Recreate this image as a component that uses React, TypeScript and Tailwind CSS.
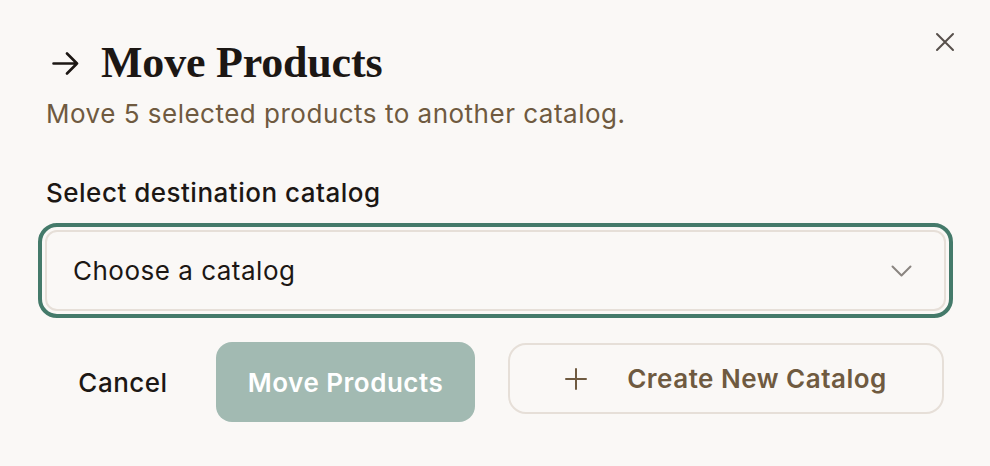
import React from "react";

export default function App() {
  return (
    <div
      className="relative w-[990px] h-[466px] bg-[#faf8f6] overflow-hidden"
      style={{ fontFamily: "Inter, 'Noto Sans', sans-serif" }}
    >
      <button className="absolute left-[933px] top-[30px] w-[24px] h-[24px] flex items-center justify-center text-[#57504b]">
        <svg width="20" height="20" viewBox="0 0 20 20" fill="none" stroke="currentColor" strokeWidth="2" strokeLinecap="round">
          <path d="M2 2 L18 18 M18 2 L2 18" />
        </svg>
      </button>

      <div className="pl-[46px] pr-[44px] pt-[38px]">
        <div className="flex items-center h-[50px] pl-[6px]">
          <svg width="27" height="23" viewBox="0 0 27 23" fill="none" stroke="#1c1714" strokeWidth="2.6" strokeLinecap="round" strokeLinejoin="round">
            <path d="M1.5 11.5 H25 M15 1.5 L25 11.5 L15 21.5" />
          </svg>
          <h1
            className="ml-[22px] text-[44px] leading-[50px] font-bold text-[#1c1714] tracking-[-0.2px]"
            style={{ fontFamily: "'Liberation Serif', 'DejaVu Serif', serif" }}
          >
            Move Products
          </h1>
        </div>
        <p className="mt-[10px] text-[26px] leading-[32px] tracking-[0.5px] text-[#6f5a40]">
          Move 5 selected products to another catalog.
        </p>

        <label className="block mt-[47px] text-[26px] leading-[32px] tracking-[0.5px] font-medium text-[#1c1714]">
          Select destination catalog
        </label>

        <div className="mt-[21px] ml-[-1px] rounded-[12px] border-2 border-[#e6dfd8] bg-[#faf8f6] h-[81px] flex items-center justify-between pl-[26px] pr-[32px] outline-[4px] outline-solid outline-[#447a6a] outline-offset-[3px]">
          <span className="text-[26px] leading-[32px] tracking-[0.5px] text-[#1c1714]">Choose a catalog</span>
          <svg width="21" height="12" viewBox="0 0 21 12" fill="none" stroke="#8a8580" strokeWidth="2" strokeLinecap="round" strokeLinejoin="round">
            <path d="M1.5 1.5 L10.5 10.5 L19.5 1.5" />
          </svg>
        </div>

        <div className="mt-[31px] flex items-start">
          <button className="h-[80px] w-[154px] flex items-center justify-center text-[26px] tracking-[0.5px] font-medium text-[#1c1714]">
            Cancel
          </button>
          <button className="ml-[16px] h-[80px] w-[259px] rounded-[16px] bg-[#a2bab2] flex items-center justify-center text-[26px] tracking-[0.5px] font-semibold text-white">
            Move Products
          </button>
          <button className="ml-[33px] mr-[2px] mt-[1px] h-[71px] flex-1 rounded-[18px] border-2 border-[#e6dfd8] flex items-center justify-center text-[26px] tracking-[0.5px] font-semibold text-[#6f5a40]">
            <svg width="22" height="22" viewBox="0 0 22 22" fill="none" stroke="currentColor" strokeWidth="2" strokeLinecap="round">
              <path d="M11 1 V21 M1 11 H21" />
            </svg>
            <span className="ml-[40px]">Create New Catalog</span>
          </button>
        </div>
      </div>
    </div>
  );
}
